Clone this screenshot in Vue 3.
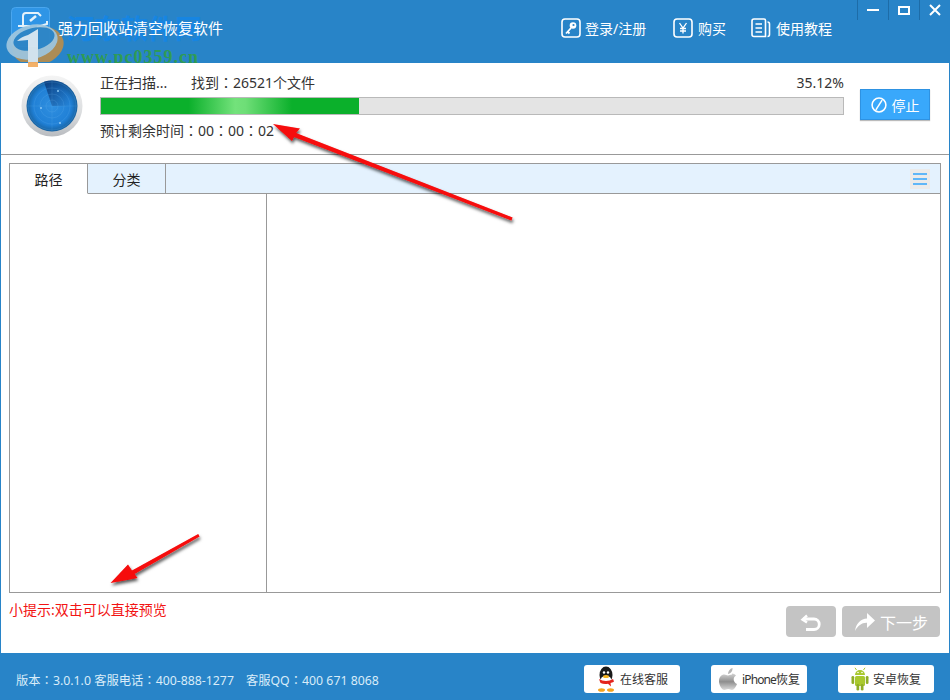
<script setup>
const navItems = [
  { key: 'key', label: '登录/注册' },
  { key: 'yen', label: '购买' },
  { key: 'book', label: '使用教程' }
]
const progress = 35.12
const fillWidth = 34.8
const rings = [6, 12, 18, 24]
</script>

<template>
  <div class="app">
    <header class="topbar">
      <div class="brand">
        <svg class="app-icon" width="39" height="40" viewBox="0 0 39 40">
          <rect x="0.5" y="0.500" width="38" height="39" rx="4" fill="#2f95e6" stroke="#4aa6ee" />
          <path d="M12 20V9a3 3 0 0 1 3-3h12l3 3" fill="none" stroke="#e4f2fb" stroke-width="2" />
          <path d="M7 19h12M26 20l10-3v-3" fill="none" stroke="#e4f2fb" stroke-width="2" />
          <path d="M19 14l6-5" stroke="#e4f2fb" stroke-width="2.500" />
        </svg>
        <span class="title">强力回收站清空恢复软件</span>
      </div>
      <nav class="nav">
        <div v-for="item in navItems" :key="item.key" class="nav-item" :class="'nav-' + item.key">
          <svg width="20" height="20" viewBox="0 0 20 20" fill="none" stroke="#fff" stroke-width="1.6">
            <template v-if="item.key === 'key'">
              <rect x="1" y="1" width="18" height="18" rx="3" />
              <circle cx="12" cy="7.500" r="3.300" fill="#fff" stroke="none" />
              <path d="M10 10l-5 5.500M6.500 13.500l2 2" stroke-width="1.800" />
              <circle cx="12.500" cy="7" r="1.100" fill="#2884c8" stroke="none" />
            </template>
            <template v-else-if="item.key === 'yen'">
              <rect x="1" y="1" width="18" height="18" rx="3" />
              <path d="M6.500 5L10 10l3.500-5M10 10v5.500M7 10.500h6M7 13h6" stroke-width="1.300" />
            </template>
            <template v-else>
              <path d="M3 1h10a1.500 1.500 0 0 1 1.500 1.500v16H3A2 2 0 0 1 1 16.500V3a2 2 0 0 1 2-2z" />
              <path d="M16.500 4a2 2 0 0 1 2 2v10.500a2 2 0 0 1-2 2" />
              <path d="M4.500 6h6.500M4.500 10h6.500M4.500 14h6.500" stroke-width="1.300" />
            </template>
          </svg>
          <span>{{ item.label }}</span>
        </div>
      </nav>
      <div class="win-controls">
        <button class="win-btn" aria-label="最小化"><i class="min"></i></button>
        <button class="win-btn" aria-label="最大化"><i class="max"></i></button>
        <button class="win-btn" aria-label="关闭">
          <svg width="12" height="12" viewBox="0 0 12 12"><path d="M1 1l10 10M11 1L1 11" stroke="#fff" stroke-width="2" /></svg>
        </button>
      </div>
    </header>

    <section class="scan">
      <svg class="radar" width="62" height="62" viewBox="0 0 62 62">
        <defs>
          <radialGradient id="rdBody" cx="50%" cy="50%" r="50%">
            <stop offset="0" stop-color="#2f8fe0" />
            <stop offset="0.75" stop-color="#2080d6" />
            <stop offset="1" stop-color="#17619f" />
          </radialGradient>
          <linearGradient id="rdRim" x1="0" y1="0" x2="0" y2="1">
            <stop offset="0" stop-color="#f4f4f4" />
            <stop offset="0.6" stop-color="#dcdee0" />
            <stop offset="1" stop-color="#b9bcc0" />
          </linearGradient>
          <linearGradient id="rdSweep" x1="0" y1="0" x2="1" y2="0.45">
            <stop offset="0" stop-color="#0c3f80" stop-opacity="1" />
            <stop offset="1" stop-color="#0c3f80" stop-opacity="0" />
          </linearGradient>
        </defs>
        <circle cx="31" cy="31" r="30.500" fill="url(#rdRim)" />
        <circle cx="31" cy="31" r="25.500" fill="url(#rdBody)" />
        <path d="M31 31L23 6.800A25.500 25.500 0 0 1 56.500 31z" fill="url(#rdSweep)" />
        <circle v-for="r in rings" :key="r" cx="31" cy="31" :r="r" fill="none" stroke="#6db4ee" stroke-opacity="0.28" stroke-width="0.7" />
        <path d="M31 5.500v51M5.500 31h51" stroke="#6db4ee" stroke-opacity="0.22" stroke-width="0.7" />
        <circle cx="37" cy="16" r="1" fill="#8cc8f5" />
        <circle cx="20" cy="33" r="1" fill="#8cc8f5" />
        <circle cx="39" cy="48" r="1.100" fill="#8cc8f5" />
      </svg>
      <div class="scan-main">
        <div class="scan-top">
          <span class="scan-state">正在扫描...</span>
          <span class="scan-found">找到<i class="cl">：</i>26521个文件</span>
          <span class="scan-pct">{{ progress }}%</span>
        </div>
        <div class="bar">
          <div class="bar-fill" :style="{ width: fillWidth + '%' }"></div>
        </div>
        <div class="scan-time">预计剩余时间<i class="cl">：</i>00<i class="cl">：</i>00<i class="cl">：</i>02</div>
      </div>
      <button class="stop">
        <svg width="16" height="16" viewBox="0 0 18 18" fill="none" stroke="#fff" stroke-width="1.700">
          <circle cx="9" cy="9" r="7.800" />
          <path d="M5.500 14.500L12.500 3.500" />
        </svg>
        <span>停止</span>
      </button>
    </section>

    <section class="panel">
      <div class="tabs">
        <div class="tab active">路径</div>
        <div class="tab">分类</div>
        <div class="tabs-rest">
          <div class="menu-btn"><i></i><i></i><i></i></div>
        </div>
      </div>
      <div class="panes">
        <div class="pane-left"></div>
        <div class="pane-right"></div>
      </div>
    </section>

    <section class="hint-row">
      <div class="hint">小提示:双击可以直接预览</div>
      <div class="steps">
        <button class="step back" aria-label="返回">
          <svg width="24" height="20" viewBox="0 0 24 20" fill="none" stroke="#fff" stroke-width="2.800">
            <path d="M8 3.500L3.500 7.500 8 10.500" stroke-width="2.400" />
            <path d="M4 7h11a5 5 0 0 1 0 10.500H7" />
          </svg>
        </button>
        <button class="step next">
          <svg width="22" height="20" viewBox="0 0 22 20">
            <path d="M1 19C2 11 7 7 13 6.500V1l8 7.500-8 7.500v-5.200C8 10.500 4 13.500 1 19z" fill="#fff" />
          </svg>
          <span>下一步</span>
        </button>
      </div>
    </section>

    <footer class="footer">
      <div class="version">版本<i class="cl">：</i>3.0.1.0 客服电话<i class="cl">：</i>400-888-1277<span class="gap"></span>客服QQ<i class="cl">：</i>400 671 8068</div>
      <div class="foot-btns">
        <button class="foot-btn">
          <svg width="20" height="26" viewBox="0 0 20 26">
            <ellipse cx="10" cy="9" rx="6.500" ry="8.500" fill="#1a1a1a" />
            <ellipse cx="10" cy="16" rx="6" ry="6.500" fill="#fff" />
            <path d="M3 13c4 2.500 10 2.500 14 0l1 2.500c-1.500 1-2.500 1.300-3.500 1.500l.5 3.500-3-2.800c-2 .6-5 .5-7.500-.7L3 13z" fill="#e3231c" />
            <ellipse cx="10" cy="10.500" rx="3" ry="1.500" fill="#f5b21c" />
            <circle cx="8" cy="6.500" r="1.200" fill="#fff" />
            <circle cx="12" cy="6.500" r="1.200" fill="#fff" />
            <ellipse cx="5.500" cy="24" rx="3.500" ry="1.800" fill="#f5a31c" />
            <ellipse cx="14.500" cy="24" rx="3.500" ry="1.800" fill="#f5a31c" />
          </svg>
          <span>在线客服</span>
        </button>
        <button class="foot-btn">
          <svg width="20" height="24" viewBox="0 0 20 24">
            <defs>
              <linearGradient id="apl" x1="0" y1="0" x2="0" y2="1">
                <stop offset="0" stop-color="#d4d4d4" />
                <stop offset="0.5" stop-color="#8e8e8e" />
                <stop offset="1" stop-color="#dcdcdc" />
              </linearGradient>
            </defs>
            <path d="M14 7.500c-1.800 0-2.800 1-4 1s-2.200-1-3.800-1C3.500 7.500 1 10 1 14c0 4.500 3 9 5.300 9 1.500 0 2.200-1 3.900-1s2.300 1 3.800 1c2 0 4-3.300 5-6-2.200-1-3.300-2.600-3.300-4.500 0-1.800 1-3.200 2.300-4-1-1.300-2.500-2-4-2z" fill="url(#apl)" />
            <path d="M10 7c0-3 2-5.300 4.500-6 .2 3-1.800 5.700-4.500 6z" fill="#b5b5b5" />
          </svg>
          <span><span class="tight">iPhone</span>恢复</span>
        </button>
        <button class="foot-btn">
          <svg width="18" height="24" viewBox="0 0 18 24" fill="#a9c92e">
            <path d="M4 8a5 5 0 0 1 10 0z" />
            <path d="M5.500 3L4 .8M12.500 3L14 .8" stroke="#a9c92e" stroke-width="1" />
            <rect x="4" y="9" width="10" height="10" rx="1.500" />
            <rect x="0.500" y="9" width="2.700" height="8" rx="1.300" fill="#8fae26" />
            <rect x="14.800" y="9" width="2.700" height="8" rx="1.300" fill="#8fae26" />
            <rect x="5.500" y="17" width="2.700" height="6.500" rx="1.300" fill="#8fae26" />
            <rect x="9.800" y="17" width="2.700" height="6.500" rx="1.300" fill="#8fae26" />
            <circle cx="7" cy="5.500" r="0.800" fill="#fff" />
            <circle cx="11" cy="5.500" r="0.800" fill="#fff" />
          </svg>
          <span>安卓恢复</span>
        </button>
      </div>
    </footer>

    <!-- 覆盖在截图上的水印与标注箭头 -->
    <div class="wm-cn">河东软件网</div>
    <div class="wm-url">www.pc0359.cn</div>
    <svg class="wm-logo" width="62" height="48" viewBox="0 0 62 48">
      <defs>
        <clipPath id="wmClip"><path d="M0 0h62v43H0zM23 43h10v5H23z" /></clipPath>
      </defs>
      <g clip-path="url(#wmClip)">
        <ellipse cx="33" cy="27" rx="26" ry="19" transform="rotate(-14 33 27)" fill="#b48d50" />
        <ellipse cx="27" cy="23" rx="26" ry="17" transform="rotate(-14 27 23)" fill="#a3c8de" fill-opacity="0.95" />
        <ellipse cx="29" cy="20" rx="21" ry="11" transform="rotate(-14 29 20)" fill="#2e86c6" />
        <path d="M23 16c-4 1-8 3-11 6l11-1v27h10V10z" fill="#dbe8f0" />
        <path d="M23 43h10v5H23z" fill="#f3ad62" />
      </g>
    </svg>
    <svg class="arrows" width="950" height="700" viewBox="0 0 950 700">
      <defs>
        <filter id="arrowShadow" x="-20%" y="-30%" width="140%" height="170%">
          <feDropShadow dx="1" dy="2.500" stdDeviation="1.800" flood-color="#000" flood-opacity="0.65" />
        </filter>
      </defs>
      <g filter="url(#arrowShadow)" fill="#f60808">
        <path d="M273 124L300 128.500 296 133 512.600 217.400 511.400 220.600 294 137 292 141z" />
        <path d="M110.500 583L128 564.500 132 570.500 198.200 534 199.600 536.500 134.500 574 137.500 578z" />
      </g>
    </svg>
  </div>
</template>

<style>
html, body { margin: 0; padding: 0; background: #fff; }
</style>

<style scoped>
.app {
  position: relative;
  width: 950px;
  height: 700px;
  box-sizing: border-box;
  display: flex;
  flex-direction: column;
  background: #fff;
  border-left: 1px solid #2884c8;
  border-right: 1px solid #2884c8;
  overflow: hidden;
  font-family: "Noto Sans", "Noto Sans CJK SC", sans-serif;
  color: #333;
}
button { font-family: inherit; padding: 0; border: 0; }
.cl { font-style: normal; font-family: "Noto Sans CJK TC", sans-serif; }
.topbar {
  flex: none;
  height: 63px;
  margin: 0 -1px;
  background: #2884c8;
  display: flex;
  position: relative;
}
.brand {
  display: flex;
  align-items: center;
  padding: 7px 0 0 11px;
  height: 40px;
  gap: 8px;
}
.app-icon { flex: none; }
.title {
  position: relative;
  z-index: 3;
  color: #fff;
  font-size: 15px;
  line-height: 40px;
  white-space: nowrap;
  margin-top: 2px;
}
.nav {
  position: absolute;
  left: 561px;
  top: 18px;
  display: flex;
  color: #fff;
  font-size: 14px;
}
.nav-item { display: flex; align-items: center; gap: 5px; height: 20px; color: #fff; white-space: nowrap; }
.nav-key { width: 112px; gap: 4px; }
.nav-yen { width: 78px; }
.win-controls {
  position: absolute;
  left: 857px;
  top: 0;
  display: flex;
}
.win-btn {
  width: 31px;
  height: 20px;
  background: transparent;
  border-left: 1px solid #1d6ca8;
  display: flex;
  align-items: center;
  justify-content: center;
}
.min { display: block; width: 12px; height: 2px; background: #fff; }
.max { display: block; width: 8px; height: 5px; border: 2px solid #fff; }
.scan {
  flex: none;
  height: 92px;
  box-sizing: border-box;
  background: #fff;
  border-bottom: 1px solid #999;
  display: flex;
  padding: 0 0 0 20px;
  position: relative;
  z-index: 2;
}
.radar { flex: none; margin-top: 12px; margin-right: 17px; }
.scan-main { width: 744px; flex: none; }
.scan-top {
  display: flex;
  font-size: 14px;
  height: 34px;
  line-height: 39px;
  color: #333;
}
.scan-state { width: 91px; }
.scan-pct { margin-left: auto; }
.bar {
  height: 18px;
  box-sizing: border-box;
  border: 1px solid #b9b9b9;
  background: #e4e4e4;
}
.bar-fill {
  height: 100%;
  background: linear-gradient(90deg, #0bb02b 0%, #0bb02b 34%, #73e27b 52%, #6ede77 56%, #0bb02b 74%, #0bb02b 100%);
}
.scan-time {
  font-size: 14px;
  line-height: 31px;
  color: #333;
  white-space: nowrap;
}
.stop {
  flex: none;
  margin: 26px 0 0 16px;
  width: 70px;
  height: 31px;
  box-sizing: border-box;
  background: #39a8fb;
  border: 1px solid #2e92e2;
  box-shadow: 0 1px 1px #bbb;
  color: #fff;
  font-size: 14px;
  display: flex;
  align-items: center;
  justify-content: center;
  gap: 5px;
}
.panel {
  flex: none;
  margin: 8px 0 0 8px;
  width: 932px;
  height: 430px;
  box-sizing: border-box;
  border: 1px solid #999;
  display: flex;
  flex-direction: column;
}
.tabs {
  flex: none;
  height: 30px;
  display: flex;
  background: #e4f2fe;
  font-size: 14px;
  color: #222;
}
.tab {
  width: 78px;
  box-sizing: border-box;
  border-right: 1px solid #999;
  border-bottom: 1px solid #999;
  text-align: center;
  line-height: 31px;
}
.tab.active { background: #fff; border-bottom-color: #fff; }
.tabs-rest {
  flex: 1;
  border-bottom: 1px solid #999;
  display: flex;
  justify-content: flex-end;
}
.menu-btn {
  width: 20px;
  height: 20px;
  margin: 5px 10px 0 0;
  background: #eaeaea;
  display: flex;
  flex-direction: column;
  align-items: center;
  justify-content: center;
  gap: 3px;
}
.menu-btn i { display: block; width: 14px; height: 2px; background: #5fb6f8; }
.panes { flex: 1; display: flex; }
.pane-left { width: 256px; border-right: 1px solid #999; }
.pane-right { flex: 1; }
.hint-row { flex: 1; display: flex; justify-content: space-between; padding: 0 9px 0 8px; }
.hint { color: #f21414; font-size: 14px; line-height: 34px; }
.steps { display: flex; gap: 6px; margin-top: 13px; }
.step {
  height: 31px;
  background: #c4c4c4;
  border-radius: 4px;
  color: #fff;
  display: flex;
  align-items: center;
  justify-content: center;
}
.back { width: 50px; }
.next { width: 98px; gap: 4px; font-size: 16px; }
.footer {
  flex: none;
  height: 47px;
  box-sizing: border-box;
  margin: 0 -1px;
  background: #2884c8;
  display: flex;
  align-items: center;
  justify-content: space-between;
  padding: 5px 16px 0;
}
.version { color: #d9ecf9; font-size: 12.3px; margin-top: 1px; white-space: nowrap; }
.gap { display: inline-block; width: 12px; }
.foot-btns { display: flex; gap: 31px; }
.foot-btn {
  width: 96px;
  height: 28px;
  background: #fff;
  border-radius: 3px;
  display: flex;
  align-items: center;
  justify-content: center;
  gap: 4px;
  color: #333;
  font-size: 12px;
  white-space: nowrap;
}
.tight { letter-spacing: -0.9px; }
.wm-cn {
  position: absolute;
  left: 66px;
  top: 12px;
  font-size: 27px;
  line-height: 34px;
  font-weight: 700;
  color: #1685e2;
  white-space: nowrap;
  z-index: 1;
}
.wm-url {
  position: absolute;
  left: 66px;
  top: 47px;
  font-family: "Liberation Serif", serif;
  font-weight: 700;
  font-size: 18px;
  line-height: 20px;
  letter-spacing: 1px;
  color: #2f9b55;
  white-space: nowrap;
  z-index: 1;
}
.wm-logo {
  position: absolute;
  left: 4px;
  top: 19px;
  z-index: 2;
  opacity: 0.95;
}
.arrows {
  position: absolute;
  left: -1px;
  top: 0;
  z-index: 5;
  pointer-events: none;
}
</style>
